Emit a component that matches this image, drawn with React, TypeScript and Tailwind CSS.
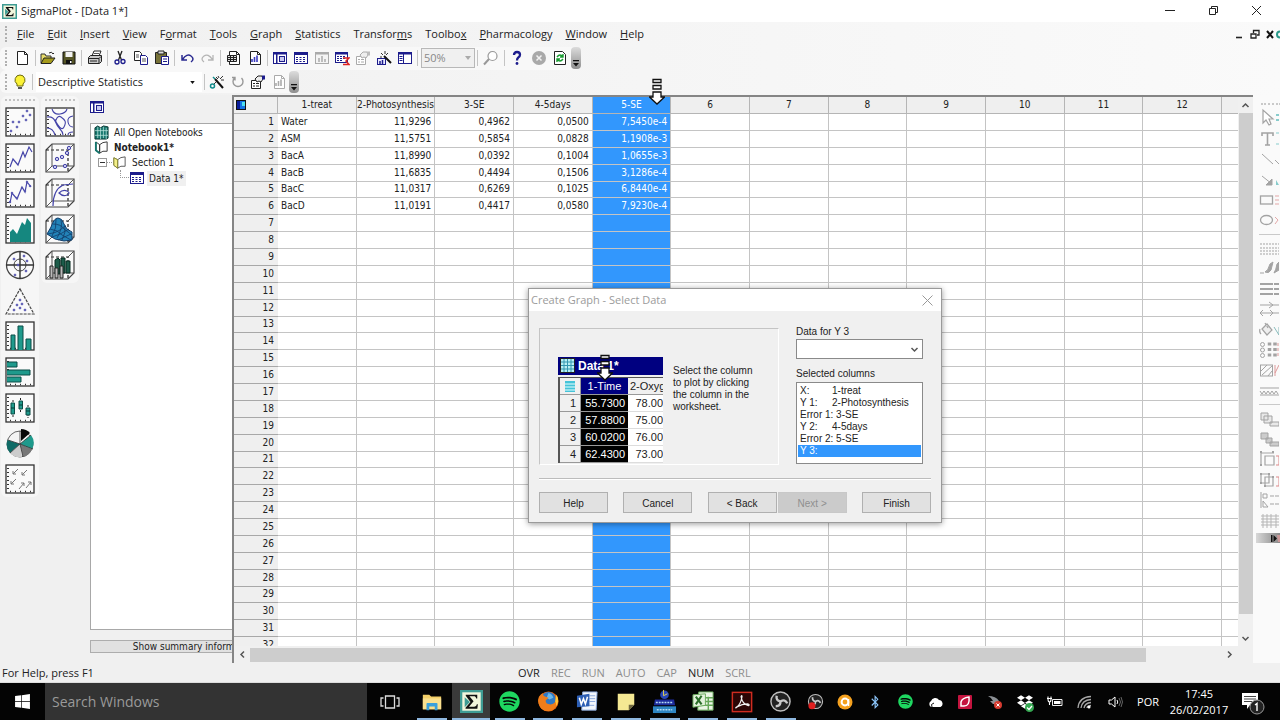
import type { ReactNode } from "react";
import { FaSpotify, FaBluetoothB, FaDropbox, FaWindows } from "react-icons/fa";

const NAVY = "#1c1c8c";
const TEAL = "#1f9a8c";

function Icon({ children, size = 16, view = 16 }: { children: ReactNode; size?: number; view?: number }) {
  return (
    <svg width={size} height={size} viewBox={`0 0 ${view} ${view}`} fill="none" aria-hidden="true" className="block shrink-0">
      {children}
    </svg>
  );
}

function SigmaLogo({ size = 14 }: { size?: number }) {
  return (
    <Icon size={size} view={22}>
      <rect x="1" y="1" width="20" height="20" fill="#f2f6dc" stroke="#3f9c94" strokeWidth="2.4" />
      <path d="M5.500 4.500h11v3.600h-1c-.3-1.600-1-2.100-2.500-2.100H9l4 4.800-4.400 5.200h4.800c1.600 0 2.200-.6 2.700-2.300h1l-.5 4.300H5.300v-1L10 11.500 5.500 5.600z" fill="#111" />
      <path d="M4.500 7l5 4.500-5 5z" fill="#3f9c94" />
    </Icon>
  );
}

/* ---------- toolbar drawings ---------- */
const SheetWindow = () => (
  <Icon>
    <rect x="1.500" y="2.500" width="13" height="11" fill="#fff" stroke={NAVY} />
    <path d="M1 2h14v3H1z" fill={NAVY} />
    <path d="M3 7.500h10M3 9.500h10M3 11.500h10" stroke={NAVY} strokeDasharray="2 1.500" />
  </Icon>
);
const PaneWindow = () => (
  <Icon>
    <rect x="1.500" y="2.500" width="13" height="11" fill="#fff" stroke={NAVY} />
    <path d="M1 2h14v2.500H1zM4 4h1.500v9H4z" fill={NAVY} />
    <rect x="7.500" y="6.500" width="5" height="5" fill="#c8c8f0" stroke={NAVY} />
  </Icon>
);
const SplitWindow = () => (
  <Icon>
    <rect x="1.500" y="2.500" width="13" height="11" fill="#fff" stroke={NAVY} />
    <path d="M1 2h14v2.500H1zM6 4h1v9H6z" fill={NAVY} />
    <path d="M2.500 6.500h3M2.500 8.500h3M2.500 10.500h3" stroke={NAVY} />
  </Icon>
);
const GrayWindow = () => (
  <Icon>
    <rect x="1.500" y="2.500" width="13" height="11" fill="#f4f4f4" stroke="#aaa" />
    <path d="M1 2h14v2.500H1z" fill="#aaa" />
    <path d="M5 12V8M8 12V6M11 12V9" stroke="#aaa" strokeWidth="1.500" />
  </Icon>
);
const RedSheet = () => (
  <Icon>
    <rect x="1.500" y="2.500" width="12" height="10" fill="#fff" stroke={NAVY} />
    <path d="M1 2h13v2.500H1z" fill={NAVY} />
    <path d="M3 6.500h9M3 8.500h9M3 10.500h6" stroke={NAVY} strokeDasharray="2 1" />
    <path d="M9 8h6l-3 3 3 3.500H9" stroke="#d22" strokeWidth="1.500" />
  </Icon>
);
const Properties = ({ color = "#222", accent = NAVY }: { color?: string; accent?: string }) => (
  <Icon>
    <path d="M1.500 6.500h9v8h-9z" fill="#fff" stroke={color} />
    <path d="M3 9.500h2M6 9.500h3M3 12h2M6 12h3" stroke={color} />
    <path d="M5 5l3-3h4l1 3-2 3-2-1-2 1z" fill="#eee" stroke={color} />
    <path d="M12 1.500h3v4h-3z" fill={accent} />
  </Icon>
);
const Wand = () => (
  <Icon>
    <path d="M6 5l8 9" stroke="#111" strokeWidth="2" />
    <path d="M9 2l1 2M14 2l-3 3M15 6l-3 0M7 3l2 2" stroke="#333" />
    <path d="M7 8l-3 3" stroke="#333" />
    <circle cx="3.500" cy="12" r="2" stroke="#118b8b" strokeWidth="1.500" />
    <path d="M4 3l2 2" stroke="#118b8b" strokeWidth="1.500" />
  </Icon>
);
const GraphWand = () => (
  <Icon>
    <rect x="1.500" y="8.500" width="8" height="6" fill="#ececff" stroke={NAVY} />
    <path d="M4 14v-3M6.500 14v-4" stroke={NAVY} strokeWidth="1.500" />
    <path d="M8 6l7 7" stroke="#111" strokeWidth="2" />
    <path d="M5 3l2 2M9 1v3M12 3l-2 2M4 7h2" stroke="#333" />
  </Icon>
);
const PageIcon = ({ kind, color = "#222" }: { kind: "blank" | "grid" | "chart"; color?: string }) => (
  <Icon>
    <path d="M3.500 1.500h7l3 3v10h-10z" fill="#fff" stroke={color} />
    <path d="M10.500 1.500v3h3" stroke={color} />
    {kind === "grid" && <path d="M1.500 5.500h9v6h-9zM1.500 7.500h9M1.500 9.500h9M4.500 5.500v6M7.500 5.500v6" fill="#ddd" stroke="#222" />}
    {kind === "chart" && <path d="M5 12V9M7.500 12V7M10 12V5.500" stroke={color === "#222" ? "#3b3bc0" : color} strokeWidth="1.600" />}
  </Icon>
);

const Sep = () => <span className="mx-[2px] h-4 w-px shrink-0 bg-[#c4c4c4]" />;
const Grip = () => <span className="mx-[5px] h-4 w-0 shrink-0 border-l-2 border-dotted border-[#b0b0b0]" />;
const ToolEnd = () => (
  <span className="flex h-[22px] w-[10px] shrink-0 items-end justify-center rounded-sm bg-gradient-to-b from-[#dcdcdc] to-[#8f8f8f] pb-[2px]">
    <svg width="6" height="7" viewBox="0 0 6 7" aria-hidden="true"><path d="M0 0h6v1.200H0zM0 3h6L3 6.500z" fill="#111" /></svg>
  </span>
);
const Tool = ({ label, children }: { label: string; children: ReactNode }) => (
  <button aria-label={label} className="flex h-5 min-w-0 flex-1 items-center justify-center">{children}</button>
);

/* ---------- menus ---------- */
const menus: [string, string, string][] = [
  ["", "F", "ile"], ["", "E", "dit"], ["", "I", "nsert"], ["", "V", "iew"], ["F", "o", "rmat"], ["", "T", "ools"],
  ["", "G", "raph"], ["", "S", "tatistics"], ["Transfor", "m", "s"], ["Toolbo", "x", ""], ["", "P", "harmacology"],
  ["", "W", "indow"], ["", "H", "elp"],
];

/* ---------- graph palette ---------- */
const Plot = ({ children }: { children?: ReactNode }) => (
  <Icon size={30} view={30}>
    <rect x="1" y="1" width="28" height="28" fill="#fafafa" stroke="#333" strokeWidth="1.300" />
    <path d="M3 4v24" stroke="#333" strokeWidth="2" strokeDasharray="1 3" />
    <path d="M5 27.500h24" stroke="#333" strokeWidth="1.500" strokeDasharray="1 4" />
    {children}
  </Icon>
);
const Cube = ({ children }: { children?: ReactNode }) => (
  <Icon size={30} view={30}>
    <path d="M1 7l6-6h22v22l-6 6H1z" fill="#fafafa" stroke="#444" strokeWidth="1.200" />
    <path d="M1 7h22v22" stroke="#222" strokeWidth="1.200" strokeDasharray="3 2" />
    <path d="M7 1v22h22M7 23l-6 6M29 1l-6 6" stroke="#555" />
    {children}
  </Icon>
);
const dots = (pts: number[][], r = 1.3) => pts.map(([x, y]) => <circle key={`${x}-${y}`} cx={x} cy={y} r={r} stroke="#4444a8" fill="#c9c9ee" />);

const paletteA: [string, ReactNode][] = [
  ["Scatter plot", <Plot>{dots([[6, 24], [8, 15], [12, 20], [14, 15], [18, 9], [21, 13], [22, 4], [25, 8]], 0.9)}</Plot>],
  ["Line plot", <Plot><path d="M5 24l3-8 5 6 5-13 2 5 4-10 3 5" stroke="#4444a8" strokeWidth="1.200" /></Plot>],
  ["Line and scatter plot", <Plot><path d="M5 25l2-10 5 6 5-12 3 5 2-10 4 5" stroke="#4444a8" strokeWidth="1.200" />{dots([[5, 24], [7, 15], [12, 20], [17, 10], [20, 13], [22, 4], [25, 8]], 0.8)}</Plot>],
  ["Area plot", <Plot><path d="M5 28V18l3-3 4 5 5-12 3 3 2-7 4 5v19z" fill="#15877f" /></Plot>],
  ["Polar plot", <Icon size={30} view={30}><circle cx="15" cy="15" r="13.500" fill="#fafafa" stroke="#444" strokeWidth="1.300" /><circle cx="15" cy="15" r="6" stroke="#444" /><path d="M15 1v28M1 15h28" stroke="#333" strokeWidth="1.400" />{dots([[9, 9], [19, 6], [22, 11], [21, 21], [10, 25], [13, 15]], 0.9)}</Icon>],
  ["Ternary plot", <Icon size={30} view={30}><path d="M15 3l14 25H1z" fill="#fafafa" stroke="#444" strokeDasharray="3 1" strokeWidth="1.200" />{dots([[15, 14], [12, 19], [17, 18], [15, 22], [9, 24], [20, 24]], 0.9)}</Icon>],
  ["Vertical bar chart", <Plot><path d="M6 29V14h4v15M13 29V5h5v24M21 29V18h5v11" fill={TEAL} stroke="#0c4d46" /></Plot>],
  ["Horizontal bar chart", <Plot><path d="M2 5h10v5H2M2 13h23v5H2M2 20h14v5H2" fill={TEAL} stroke="#0c4d46" /></Plot>],
  ["Box plot", <Plot><path d="M8 7v17M15.500 5v14M23 12v13" stroke="#222" strokeDasharray="2 1" /><path d="M6 10h3.500v11H6zM14 8h3.500v8H14zM21 15h4v7h-4z" fill={TEAL} stroke="#0c4d46" /><path d="M6 15h3.500M14 12h3.500M21 18h4" stroke="#083b36" /></Plot>],
  ["Pie chart", <Icon size={30} view={30}><circle cx="15" cy="16" r="13" fill="#f4f4f4" stroke="#666" /><path d="M15 16L2.500 12a13 13 0 002.500 13z" fill="#0f6b66" /><path d="M15 16L5 25a13 13 0 0012 4z" fill="#ccc" /><path d="M15 16l3 13a13 13 0 009-8z" fill="#777" /><path d="M15 16l12 5a13 13 0 00-1-14z" fill={TEAL} /><path d="M16 13V1a13 13 0 019 4z" fill="#080808" /><path d="M15 16L3 12M15 16L5 25M15 16l3 13M15 16l13 5M15 16L26 7M15 16V3" stroke="#333" strokeWidth=".8" /></Icon>],
  ["Vector plot", <Plot><path d="M13 5l-5 5m0-3v3h3M22 6l-5 5m0-3v3h3M11 15l-5 5m0-3v3h3M14 25l5-6m-3 0h3v3M21 24l5-6m-3 0h3v3" stroke="#777" /></Plot>],
];
const paletteB: [string, ReactNode][] = [
  ["Contour plot", <Plot><path d="M2 10q6-1 8 4t5 8 3 6M2 21q6 0 8 7M7 2q2 6 8 5t7-5M11 13q2-5 5-3t4 4-1 6-6-2-2-5zM28 9q-6 1-5 6t5 5M23 28q0-3 5-3" stroke="#4444a8" strokeWidth="1.100" /></Plot>],
  ["3D scatter plot", <Cube>{dots([[10, 24], [12, 16], [17, 14], [22, 10], [24, 5], [20, 23]], 1.7)}</Cube>],
  ["3D line plot", <Cube><path d="M8 28q0-16 10-21l10-1M14 15q4-4 8-2t0 4-8-2z" stroke="#4444a8" strokeWidth="1.200" /></Cube>],
  ["Mesh plot", <Cube><path d="M2 20l4-7q3-9 7-9t6 6 8 8v8l-8 1-9-2z" fill="#2383b8" stroke="#123c68" /><path d="M5 15q8 1 12 6l9 5M8 10q8 0 11 5l8 6M3 20q8-1 12-4l5-4M7 23q8-2 17-8M13 26l13-6M11 5Q12 14 7 22M16 6q2 8-4 18M20 11q1 8-3 15" stroke="#123c68" strokeWidth=".8" /></Cube>],
  ["3D bar chart", <Cube><path d="M10 10l3-2 2 2v14h-5zM16 8h4v15h-4zM21 11h4v12h-4z" fill="#1c5c4a" stroke="#082a20" /><path d="M5 16h3v12H5zM10 18h3v10h-3zM15 16h3v12h-3z" fill="#bbb" stroke="#222" /></Cube>],
];
const Palette = ({ items, rows }: { items: [string, ReactNode][]; rows: string }) => (
  <div className="flex w-[38px] flex-col rounded-md bg-[#f6f6f6] pt-[3px]">
    <span className="mx-1 mb-[3px] h-0 border-t-2 border-dotted border-[#c2c2c2]" />
    <div className={`flex flex-col ${rows}`}>
      {items.map(([label, art]) => (
        <button key={label} aria-label={label} className="flex min-h-0 flex-1 items-center justify-center">{art}</button>
      ))}
    </div>
  </div>
);

/* ---------- worksheet ---------- */
const heads = ["1-treat", "2-Photosynthesis", "3-SE", "4-5days", "5-SE", "6", "7", "8", "9", "10", "11", "12"];
const data = [
  ["Water", "11,9296", "0,4962", "0,0500", "7,5450e-4"],
  ["ASM", "11,5751", "0,5854", "0,0828", "1,1908e-3"],
  ["BacA", "11,8990", "0,0392", "0,1004", "1,0655e-3"],
  ["BacB", "11,6835", "0,4494", "0,1506", "3,1286e-4"],
  ["BacC", "11,0317", "0,6269", "0,1025", "6,8440e-4"],
  ["BacD", "11,0191", "0,4417", "0,0580", "7,9230e-4"],
];

function Worksheet() {
  return (
    <table className="h-[calc(100%+8px)] w-full table-fixed border-separate border-spacing-0 text-[10px] leading-3 text-[#222]">
      <colgroup>
        <col className="w-[44px]" />
        {heads.map((h) => <col key={h} />)}
        <col className="w-[16px]" />
      </colgroup>
      <thead>
        <tr className="h-[17px] bg-[#efefef]">
          <th aria-label="Select all" className="border-r border-b border-[#b5b5b5] p-0">
            <svg width="10" height="10" viewBox="0 0 10 10" className="ml-[2px] block" aria-hidden="true">
              <rect x=".5" y=".5" width="9" height="9" fill="#1473e6" stroke="#111" /><path d="M1 1h3v8H1z" fill="#0a1e9a" /><path d="M6 2h3v4H6z" fill="#4fe0ee" />
            </svg>
          </th>
          {heads.map((h, c) => (
            <th key={h} scope="col" className={`overflow-hidden border-r border-b border-[#b5b5b5] p-0 font-normal whitespace-nowrap ${c === 4 ? "bg-[#3297fd] text-white" : ""}`}>{h}</th>
          ))}
          <td className="border-b border-[#b5b5b5] p-0" />
        </tr>
      </thead>
      <tbody>
        {Array.from({ length: 32 }, (_, r) => (
          <tr key={r} className="bg-white">
            <th scope="row" className="border-b border-[#a8a8a8] bg-[#efefef] p-0 pr-1 text-right font-normal">{r + 1}</th>
            {heads.map((h, c) => (
              <td key={h} className={`border-r border-b border-[#c4c4c4] p-0 whitespace-nowrap ${c === 0 ? "pl-[3px]" : "pr-[3px] text-right"} ${c === 4 ? "bg-[#3297fd] text-white" : ""}`}>
                {data[r]?.[c] ?? ""}
              </td>
            ))}
            <td className="border-b border-[#c4c4c4] p-0" />
          </tr>
        ))}
      </tbody>
    </table>
  );
}

const Chevron = ({ dir }: { dir: "up" | "down" | "left" | "right" }) => {
  const d = { up: "M1.500 6L4.500 3l3 3", down: "M1.500 3l3 3 3-3", left: "M6 1.500L3 4.500l3 3", right: "M3 1.500l3 3-3 3" }[dir];
  return <svg width="9" height="9" viewBox="0 0 9 9" fill="none" aria-hidden="true"><path d={d} stroke="#555" strokeWidth="1.500" /></svg>;
};

const DownArrow = () => (
  <svg width="16" height="27" viewBox="0 0 16 27" aria-hidden="true">
    <path d="M4 1.500h8v3H4zM4 7.500h8v3.500H4zM4 14h8v5h3.500L8 26 .5 19H4z" fill="#fff" stroke="#111" strokeWidth="1.300" />
  </svg>
);

/* ---------- drawing toolbar on the right edge ---------- */
const G = "#a3a3a3";
const edgeA: [string, ReactNode][] = [
  ["Select", <><path d="M4 2v13l3-3 3 5 2-1-2-5h4z" fill="#fff" stroke={G} strokeWidth="1.200" /><path d="M17 7h3M17 12h3" stroke="#8cc" strokeWidth="2" /></>],
  ["Text", <><path d="M3 7V4h11v3M8.500 4v12M6 16h5" stroke={G} strokeWidth="1.600" /><path d="M17 4h3M17 15h3" stroke="#8cc" /></>],
  ["Line", <path d="M3 5l11 10M16 11l4 4" stroke={G} />],
  ["Arrow", <><path d="M3 6l10 8M13 9v6H7z" fill={G} stroke={G} /><path d="M17 10l3 5h-3z" fill="#8cc" /></>],
  ["Rectangle", <><rect x="1.500" y="6" width="12" height="8" stroke={G} strokeWidth="1.300" /><path d="M16 6h4M16 10h4M16 14h4" stroke="#e3a8a8" /></>],
  ["Ellipse", <><ellipse cx="7.500" cy="10" rx="6" ry="4.500" stroke={G} strokeWidth="1.300" /><path d="M16 7l3 3-3 4" stroke="#e3a8a8" /></>],
];
const edgeB: [string, ReactNode][] = [
  ["Line style", <path d="M1 6h19M1 10h19M1 13h19M1 16h19" stroke={G} strokeDasharray="2 1" />],
  ["Brush", <path d="M1 15h4M6 14q3-1 5-8l3-2-2 8q-2 4-6 2zM15 15q2-3 3-9l2-2v8z" fill={G} stroke={G} />],
  ["Line weight", <path d="M1 5h13M15 5h5M1 10h13M15 10h5M1 15h13M15 15h5" stroke={G} strokeWidth="2" />],
  ["Arrow ends", <path d="M1 6h19M10 3l4 3-4 3M1 14h19M4 11l-3 3 3 3M11 11l3 3-3 3" stroke={G} />],
  ["Fill colour", <><path d="M3 9l5-5 5 6-5 5zM6 3l3 5M1 9q-1 3 1 5" fill="#eee" stroke={G} strokeWidth="1.200" /><path d="M15 7l5 8v-8" stroke="#8bb" /></>],
  ["Symbols", <><circle cx="3.500" cy="4.500" r="2" stroke={G} /><circle cx="3.500" cy="10" r="2" stroke={G} /><circle cx="3.500" cy="15.500" r="2" stroke={G} /><path d="M10.500 2.500v15M16 2.500v15" stroke={G} strokeWidth="3.500" strokeDasharray="3 2.500" /><path d="M19 3v14" stroke="#d99" strokeDasharray="3 2" /></>],
  ["Pattern", <><rect x="1.500" y="4" width="12" height="11" stroke={G} /><path d="M2 10l6-6M3 14L13 5M9 15l4-5" stroke={G} /><path d="M16 4v11M16 12l4-8" stroke="#d99" /></>],
  ["Spacing", <path d="M1 7h19M1 10l2 3 2-3 2 3 2-3 2 3 2-3 2 3 2-3 2 3M1 14h19" stroke={G} />],
];
const edgeC: [string, ReactNode][] = [
  ["Bring to front", <path d="M2 4h7v7H2zM5 7h8v7H5zM11 13h9v4h-9z" fill="#e8e8e8" stroke={G} />],
  ["Send to back", <path d="M2 4h7v6H2zM7 9h6v5H7zM11 13h9v4h-9z" fill="#ccc" stroke={G} />],
  ["Group", <><path d="M2 2v14M2 4h13M6 7h9v9H6z" stroke={G} strokeWidth="1.200" /><path d="M1 2h2v2H1zM1 15h2v2H1zM13 2h2v2h-2z" fill={G} /><path d="M17 7h3v9h-3" stroke="#d88" /></>],
  ["Ungroup", <><path d="M2 4h8v9H2zM6 7h8v9H6z" stroke={G} strokeWidth="1.200" /><path d="M1 3h2v2H1zM9 3h2v2H9zM13 6h2v2h-2zM5 15h2v2H5zM1 12h2v2H1z" fill={G} /><path d="M17 7h3v9h-3" stroke="#d88" /></>],
  ["Align", <><path d="M2 2v16M4 4h4v4H4zM4 11l5 6H4z" stroke={G} /><path d="M11 6h9M11 14h9" stroke={G} strokeDasharray="4 1" /></>],
  ["Grid", <path d="M2 5h18M2 8h18M2 11h18M2 14h18M4 3v14M8 3v14M12 3v14M17 3v14" stroke="#b5b5b5" />],
];
const EdgeGroup = ({ items }: { items: [string, ReactNode][] }) => (
  <>
    {items.map(([label, art]) => (
      <button key={label} aria-label={label} className="flex min-h-0 flex-1 items-center"><Icon size={20} view={20}>{art}</Icon></button>
    ))}
  </>
);
const EdgeSep = () => <span className="my-[3px] h-px shrink-0 bg-[#c9c9c9]" />;

/* ---------- wizard dialog ---------- */
const columns: [string, string][] = [["X:", "1-treat"], ["Y 1:", "2-Photosynthesis"], ["Error 1:", "3-SE"], ["Y 2:", "4-5days"], ["Error 2:", "5-SE"], ["Y 3:", ""]];
const sample = [["55.7300", "78.00"], ["57.8800", "75.00"], ["60.0200", "76.00"], ["62.4300", "73.00"]];

const DialogButton = ({ children, disabled = false }: { children: ReactNode; disabled?: boolean }) => (
  <button disabled={disabled} className="h-[21px] w-[69px] border border-[#b0b0b0] bg-[#e1e1e1] pt-[2px] text-[#222] disabled:border-[#c8c8c8] disabled:bg-[#cbcbcb] disabled:text-[#8f8f8f]">{children}</button>
);

function Wizard() {
  return (
    <section role="dialog" aria-label="Create Graph - Select Data" className="absolute top-[288px] left-[528px] z-10 w-[414px] border border-[#9a9a9a] bg-[#f0f0f0] font-['Liberation_Sans',sans-serif] text-[10px] leading-3 text-[#222] shadow-[0_1px_6px_rgba(0,0,0,0.4)]">
      <header className="flex h-[22px] items-center justify-between bg-white pr-2 pl-[2px] font-['Open_Sans',sans-serif] text-[11px] text-[#9b9b9b]">
        <h2>Create Graph - Select Data</h2>
        <button aria-label="Close"><Icon size={11} view={11}><path d="M.5.5l10 10M10.500.5l-10 10" stroke="#999" /></Icon></button>
      </header>
      <div className="flex gap-[17px] px-[10px] pt-[17px]">
        <div className="flex h-[137px] w-[240px] gap-[10px] border border-t-[#c4c4c4] border-r-white border-b-white border-l-[#c4c4c4] pt-[28px] pl-[18px]">
          <div className="relative w-[105px] shrink-0">
            <div className="flex h-[18px] items-center gap-[2px] bg-[#000080] pl-[2px] text-[12px] font-bold text-white">
              <Icon><rect x=".5" y=".5" width="14" height="14" fill="#b8f0f4" stroke="#222" /><path d="M1 4h13M1 7.500h13M1 11h13M4 1v13M7.500 1v13M11 1v13" stroke="#3297b0" /></Icon>
              Data 1*
            </div>
            <div className="mt-[2px] overflow-hidden border-t border-l-2 border-[#555]">
              <table className="w-full table-fixed border-separate border-spacing-0 text-[11px] leading-4">
                <thead>
                  <tr>
                    <th aria-label="Row" className="w-[21px] border-r border-b border-[#999] p-0"><svg width="10" height="11" viewBox="0 0 10 11" className="mx-auto block" aria-hidden="true"><path d="M0 0h10v11H0z" fill="#45c3d8" /><path d="M0 3h10M0 6h10M0 9h10" stroke="#e8ffff" /></svg></th>
                    <th className="w-[47px] border-b border-[#999] bg-[#000080] p-0 font-normal text-white">1-Time</th>
                    <th className="overflow-hidden border-b border-[#999] p-0 pl-[2px] text-left font-normal whitespace-nowrap">2-Oxyg</th>
                  </tr>
                </thead>
                <tbody>
                  {sample.map(([a, b], i) => (
                    <tr key={a}>
                      <th scope="row" className="border-r border-b border-[#999] p-0 pr-1 text-right font-normal">{i + 1}</th>
                      <td className="border-b border-[#999] bg-black p-0 pr-[3px] text-right text-white">{a}</td>
                      <td className="border-b border-[#ddd] bg-white p-0 text-right">{b}</td>
                    </tr>
                  ))}
                </tbody>
              </table>
            </div>
            <div className="absolute top-[-3px] left-[39px]"><DownArrow /></div>
          </div>
          <p className="w-[86px] pt-[8px]">Select the column to plot by clicking the column in the worksheet.</p>
        </div>
        <div className="w-[127px]">
          <label htmlFor="dataFor" className="-mt-[2px] block">Data for Y 3</label>
          <div className="relative mt-px">
            <select id="dataFor" className="block h-5 w-full appearance-none border border-[#8a8a8a] bg-white" />
            <span className="pointer-events-none absolute top-[6px] right-1"><Chevron dir="down" /></span>
          </div>
          <p id="selected" className="mt-[9px]">Selected columns</p>
          <ul role="listbox" aria-labelledby="selected" className="mt-[2px] h-[82px] border border-[#8a8a8a] bg-white px-px pt-[2px]">
            {columns.map(([k, v], i) => (
              <li key={k} role="option" aria-selected={i === 5} className="flex pl-[2px] whitespace-pre aria-selected:bg-[#3297fd] aria-selected:text-white">
                <span className={k.startsWith("Error") ? "" : "w-8"}>{k}</span>
                {k.startsWith("Error") ? ` ${v}` : v}
              </li>
            ))}
          </ul>
        </div>
      </div>
      <div className="mx-[10px] mt-[13px] border-t border-b border-t-[#bcbcbc] border-b-white" />
      <footer className="flex justify-between px-[10px] pt-[12px] pb-[9px]">
        <DialogButton>Help</DialogButton>
        <DialogButton>Cancel</DialogButton>
        <div className="flex gap-px"><DialogButton>&lt; Back</DialogButton><DialogButton disabled>Next &gt;</DialogButton></div>
        <DialogButton>Finish</DialogButton>
      </footer>
    </section>
  );
}

/* ---------- taskbar ---------- */
const ObsRing = () => (<><circle cx="12" cy="12" r="10" fill="#222" stroke="#bdbdbd" strokeWidth="1.500" /><path d="M12 12q-5-1-4-6M12 12q5-3 7 2M12 12q0 5-5 5" stroke="#c9c9c9" strokeWidth="2.500" /></>);
const apps: [string, ReactNode][] = [
  ["File Explorer", <Icon size={22} view={24}><path d="M2 4h7l2 2h11v14H2z" fill="#f4cf68" /><path d="M2 8h20v12H2z" fill="#fae08f" /><path d="M6 21v-7q0-1 1-1h10q1 0 1 1v7h-3v-4H9v4z" fill="#3aa0dc" /></Icon>],
  ["SigmaPlot", <SigmaLogo size={23} />],
  ["Spotify", <FaSpotify size={21} color="#1ed760" />],
  ["Firefox", <Icon size={23} view={24}><circle cx="12" cy="12" r="10.500" fill="#e8650e" /><circle cx="12" cy="9.500" r="7.500" fill="#2f78c4" /><path d="M12 3q4 1 5 5l-4 2-3-2z" fill="#69b8ea" /><path d="M2 7q2-3 4-4 0 3 3 4l3 1-3 3q0 4 5 4 5 0 6-5 1-5-1-6 5 4 2 11-3 7-10 7T1.500 14q-1-4 .5-7z" fill="#ef7d1a" /><path d="M20 5q4 6 0 12 0-4-1-5z" fill="#ffc83a" /></Icon>],
  ["Word", <Icon size={23} view={24}><path d="M7 2h15l-1 19H6z" fill="#f2f6fc" stroke="#8aa8dc" /><path d="M14 6h6M14 9h6M14 12h6M9 16h10" stroke="#8aa8dc" /><path d="M1 6l13-2v13L1 18z" fill="#2c5eb5" /><path d="M3.500 8l2 7 2.300-6 2 5.500L12 7" stroke="#fff" strokeWidth="1.600" /></Icon>],
  ["Sticky Notes", <Icon size={22} view={24}><path d="M3 3h18v12l-6 6H3z" fill="#f4e893" /><path d="M15 21v-6h6z" fill="#6d6640" /></Icon>],
  ["Pearson Statistics", <Icon size={25} view={26}><path d="M2 17l1-6h20l1 6z" fill="#1d2b9c" /><circle cx="13" cy="6" r="4.500" fill="#2947b8" /><path d="M12 1v6l4-2" stroke="#e4d24d" /><path d="M1 18h24v7H1z" fill="#2e86c4" /><path d="M4 14h18M5 21.500h16" stroke="#b6dcf5" strokeWidth="1.500" strokeDasharray="2 1" /></Icon>],
  ["Excel", <Icon size={23} view={24}><path d="M7 2h15v19H6z" fill="#eaf5e4" stroke="#67a85a" /><path d="M13 8h9M13 12h9M8 16h14M17 7v14" stroke="#67a85a" strokeWidth="1.500" /><path d="M1 5l13-1v12L1 18z" fill="#e3f2dc" stroke="#67a85a" /><path d="M4 7l6 8M10 6l-6 9" stroke="#2c6e2a" strokeWidth="2.200" /></Icon>],
  ["Acrobat", <Icon size={22} view={24}><rect x="1.500" y="1.500" width="21" height="21" fill="#2b0505" stroke="#cf2c20" strokeWidth="1.600" /><path d="M6 18q5-4 6-12 0-2-1 0 1 8 8 10 2-1-1-2-6 0-11 3-3 2-1 1z" stroke="#f0f0f0" strokeWidth="1.400" /></Icon>],
  ["OBS", <Icon size={23} view={24}><ObsRing /></Icon>],
];
const tray: [string, ReactNode][] = [
  ["OBS recording", <Icon size={17} view={24}><ObsRing /><circle cx="7" cy="18" r="5" fill="#e02020" /></Icon>],
  ["Avast", <Icon><circle cx="8" cy="8" r="7.500" fill="#f5a11f" /><circle cx="8" cy="8" r="3.400" stroke="#fff" strokeWidth="2" /><path d="M11.500 5v7" stroke="#fff" strokeWidth="1.500" /></Icon>],
  ["Bluetooth", <FaBluetoothB size={14} color="#8cc4f8" />],
  ["Spotify", <FaSpotify size={15} color="#1ed760" />],
  ["OneDrive", <Icon><path d="M4 13a3.500 3.500 0 010-6 4.500 4.500 0 018-1 3.700 3.700 0 011.500 7z" fill="#fff" /><path d="M5 13q-2-3 2-4" stroke="#111" /></Icon>],
  ["Creative app", <Icon><rect x="1" y="1" width="14" height="14" rx="1" fill="#c4143f" /><path d="M4 12V8q1-4 8-5 1 9-5 9z" stroke="#fff" strokeWidth="1.500" /></Icon>],
  ["Network drive", <Icon><path d="M1 2q8 0 11 5H6Q5 4 1 2zM3 7h9v3H6z" fill="#8b8f94" /><circle cx="11" cy="11" r="4" fill="#d63b30" /><path d="M9.500 9.500l3 3M12.500 9.500l-3 3" stroke="#fff" /></Icon>],
  ["Dropbox", <span className="relative"><FaDropbox size={16} color="#fff" /><svg width="9" height="9" viewBox="0 0 9 9" className="absolute right-[-1px] bottom-[-2px]" aria-hidden="true"><circle cx="4.500" cy="4.500" r="4.500" fill="#35a852" /><path d="M2 4.500l2 2 3-3.500" stroke="#fff" fill="none" strokeWidth="1.200" /></svg></span>],
  ["Power", <Icon><path d="M5.500 5.500h9.500v6H5.500z" stroke="#eee" /><path d="M7 7h6.500v3H7z" fill="#fff" /><path d="M0 4.500h5M1 2.500v2M4 2.500v2M1 5q0 3 1.500 3T4 5M2.500 8v3" stroke="#fff" strokeWidth="1.100" /></Icon>],
  ["Wi-Fi", <Icon><path d="M1 14Q2 3 14 2.500M4 14q1-8 10-8.500M7 14q1-5 7-5.500M10 14q0-2 4-2.500" stroke="#a8a8a8" strokeWidth="1.300" /><circle cx="12" cy="13" r="1.500" fill="#fff" /></Icon>],
  ["Volume", <Icon><path d="M2 6h2.500L8 3v10l-3.500-3H2z" stroke="#fff" /><path d="M10 6q1.500 2 0 4" stroke="#fff" /><path d="M12 4q3 4 0 8M14 3q3 5 0 10" stroke="#666" /></Icon>],
];

const states: [string, boolean][] = [["OVR", true], ["REC", false], ["RUN", false], ["AUTO", false], ["CAP", false], ["NUM", true], ["SCRL", false]];

export default function App() {
  return (
    <div className="relative flex h-screen flex-col overflow-hidden bg-[#f0f0f0] font-['Open_Sans',sans-serif] text-[11px] leading-4 text-[#222]">
      <header className="flex h-[22px] shrink-0 items-center bg-white pl-[2px]">
        <SigmaLogo size={15} />
        <h1 className="ml-1 flex-1">SigmaPlot - [Data 1*]</h1>
        <div className="flex items-center gap-[32px] pr-[18px] pb-[2px]">
          <button aria-label="Minimize"><Icon size={11} view={11}><path d="M0 5.500h10" stroke="#222" /></Icon></button>
          <button aria-label="Restore"><Icon size={11} view={11}><path d="M1.500 3.500h6v6h-6zM3.500 3V1.500h6v6H8" stroke="#222" /></Icon></button>
          <button aria-label="Close"><Icon size={11} view={11}><path d="M1 1l9 9M10 1l-9 9" stroke="#222" /></Icon></button>
        </div>
      </header>

      <div className="shrink-0 bg-gradient-to-r from-[#f0f0f0] to-[#fafafa]">
        <nav className="flex h-6 items-center">
          <Grip />
          <ul className="flex flex-1 gap-[13px] pl-[5px]">
            {menus.map(([a, u, b]) => <li key={a + u + b}><button>{a}<span className="underline">{u}</span>{b}</button></li>)}
          </ul>
          <div className="flex items-center gap-[6px]">
            <button aria-label="Minimize worksheet"><Icon size={9} view={9}><path d="M1 7.500h6" stroke="#222" strokeWidth="1.600" /></Icon></button>
            <button aria-label="Restore worksheet"><Icon size={10} view={10}><path d="M1 5h5v4H1zM3.500 4V1.500h5.500V6H7" stroke="#222" strokeWidth="1.300" /></Icon></button>
            <button aria-label="Close worksheet" className="flex"><Icon size={9} view={9}><path d="M1 1l6 7M7 1L1 8" stroke="#111" strokeWidth="2" /></Icon><svg width="5" height="9" viewBox="0 0 5 9" aria-hidden="true"><path d="M5 1.500a3 3 0 000 6" stroke="#2a9a8a" strokeWidth="2" fill="none" /></svg></button>
          </div>
        </nav>

        <div className="flex h-6 items-center">
          <div className="flex h-[23px] items-center rounded-md bg-[#f8f8f8]">
            <Grip />
            <div className="flex w-[408px] items-center">
              <Tool label="New"><PageIcon kind="blank" /></Tool><Sep />
              <Tool label="Open"><Icon><path d="M1 13V4h4l1 2h5v2" fill="#e8dc6a" stroke="#333" /><path d="M1 13.500L4 8h11l-4 5.500z" fill="#a59a1c" stroke="#222" /><path d="M9 3q3-2 4 1l1-1" stroke="#222" /></Icon></Tool>
              <Tool label="Save"><Icon><path d="M2 2h12v12H2z" fill="#555526" stroke="#111" /><path d="M4.500 2h7v5h-7z" fill="#f2f2f2" /><path d="M5 10h6v4H5z" fill="#111" /><path d="M9 11h1.500v2H9z" fill="#fff" /></Icon></Tool><Sep />
              <Tool label="Print"><Icon><path d="M5 6l2-5h7l-2 5" fill="#fff" stroke="#222" /><path d="M1.500 7.500l2-2h11v6l-2 2h-11z" fill="#c9c9c9" stroke="#222" /><path d="M2 8.500h10v4.500M12 8.500l2-2M3 11h7" stroke="#222" /><path d="M7 3.500h5" stroke="#555" /></Icon></Tool><Sep />
              <Tool label="Cut"><Icon><path d="M6 1l3.500 9M10 1L6.500 10" stroke="#222" strokeWidth="1.300" /><circle cx="5" cy="12" r="2" stroke={NAVY} strokeWidth="1.300" /><circle cx="11" cy="11.500" r="2" stroke={NAVY} strokeWidth="1.300" /></Icon></Tool>
              <Tool label="Copy"><Icon><path d="M1.500 1.500h5l2 2v7h-7z" fill="#fff" stroke="#222" /><path d="M7.500 5.500h5l2 2v7h-7z" fill="#fff" stroke={NAVY} /><path d="M3 5h3M3 7h3M9 9h4M9 11h4" stroke="#555" /></Icon></Tool>
              <Tool label="Paste"><Icon><path d="M1.500 2.500h11v11h-11z" fill="#777238" stroke="#222" /><path d="M4 1h6v3H4z" fill="#ddd" stroke="#222" /><path d="M7.500 6.500h7v8h-7z" fill="#fff" stroke={NAVY} /><path d="M9 9h4M9 11.500h4" stroke={NAVY} /></Icon></Tool><Sep />
              <Tool label="Undo"><Icon><path d="M3 5v5h5M3.500 9.500Q8 3 12 6t0 6" stroke="#2a2a90" strokeWidth="1.500" /></Icon></Tool>
              <Tool label="Redo"><Icon><path d="M13 5v5H8M12.500 9.500Q8 3 4 6t0 6" stroke="#b5b5b5" strokeWidth="1.300" /></Icon></Tool><Sep />
              <Tool label="New worksheet"><PageIcon kind="grid" /></Tool>
              <Tool label="New graph page"><PageIcon kind="chart" /></Tool><Sep />
              <Tool label="Notebook"><PaneWindow /></Tool>
              <Tool label="Worksheet"><SheetWindow /></Tool>
              <Tool label="Graph page"><GrayWindow /></Tool>
              <Tool label="Column statistics"><RedSheet /></Tool>
              <Tool label="Object properties"><Properties color="#aaa" accent="#bbb" /></Tool>
              <Tool label="Graph wizard"><GraphWand /></Tool>
              <Tool label="Panel"><SplitWindow /></Tool><Sep />
            </div>
            <div className="relative ml-px">
              <select aria-label="Zoom" disabled className="block h-5 w-[54px] appearance-none border border-[#b8b8b8] bg-[#f0f0f0] pl-[2px] text-[#888] opacity-100"><option>50%</option></select>
              <svg width="6" height="4" viewBox="0 0 6 4" className="pointer-events-none absolute top-2 right-1" aria-hidden="true"><path d="M0 0h6L3 4z" fill="#aaa" /></svg>
            </div>
            <Sep />
            <div className="flex w-[91px] items-center">
              <Tool label="Zoom tool"><Icon><circle cx="9.500" cy="6" r="4.500" fill="#fff" stroke="#999" strokeWidth="1.200" /><path d="M6 9l-5 5.500" stroke="#999" strokeWidth="2" /></Icon></Tool><Sep />
              <Tool label="Help"><Icon><path d="M5 5q0-3 3-3t3 2.800q0 1.700-1.700 2.700Q8 8.500 8 10.500" stroke={NAVY} strokeWidth="2.300" /><circle cx="8" cy="13.500" r="1.400" fill={NAVY} /></Icon></Tool>
              <Tool label="Stop"><Icon><circle cx="8" cy="8" r="7" fill="#a9a9a9" /><path d="M5.500 5.500l5 5M10.500 5.500l-5 5" stroke="#f2f2f2" strokeWidth="1.500" /></Icon></Tool>
              <Tool label="Refresh"><Icon><path d="M2.500 1.500h8l3 3v10h-11z" fill="#fff" stroke="#222" /><path d="M5 7q3-4 6 0M11 4v3H8M11 9q-3 4-6 0M5 12V9h3" stroke="#189a30" strokeWidth="1.400" /></Icon></Tool>
            </div>
            <ToolEnd />
          </div>
        </div>

        <div className="flex h-[25px] items-start">
          <div className="flex h-[23px] items-center rounded-md bg-[#f8f8f8]">
            <Grip />
            <button aria-label="Tip" className="w-[18px]"><Icon><path d="M8 1a5 5 0 00-3 9v2h6v-2a5 5 0 00-3-9z" fill="#fbf236" stroke="#6d6a12" /><path d="M6 13h4v2H6z" fill="#555" /></Icon></button>
            <Sep />
            <div className="relative ml-[1px]">
              <select aria-label="Analysis" className="block h-5 w-[166px] appearance-none bg-white pl-[2px]"><option>Descriptive Statistics</option></select>
              <svg width="5" height="3" viewBox="0 0 6 4" className="pointer-events-none absolute top-[9px] right-[7px]" aria-hidden="true"><path d="M0 0h6L3 4z" fill="#111" /></svg>
            </div>
            <Sep />
            <div className="flex w-[82px]">
              <Tool label="Run test"><Wand /></Tool>
              <Tool label="Rerun"><Icon><path d="M4.500 4a5 5 0 107 0M2 3.500h3v3" stroke="#999" strokeWidth="1.400" /></Icon></Tool>
              <Tool label="Options"><Properties /></Tool>
              <Tool label="Result graph"><PageIcon kind="chart" color="#aaa" /></Tool>
            </div>
            <ToolEnd />
          </div>
        </div>
      </div>

      <main className="flex min-h-0 flex-1">
        <aside className="flex items-start gap-[2px] pt-px pl-[1px]" aria-label="Graph types">
          <Palette items={paletteA} rows="h-[393px]" />
          <Palette items={paletteB} rows="h-[179px]" />
        </aside>
        <aside className="ml-[11px] flex w-[142px] flex-col overflow-hidden pt-1" aria-label="Notebooks">
          <button aria-label="Notebook view" className="ml-[-1px] flex h-6 w-4 items-start"><PaneWindow /></button>
          <div className="min-h-0 flex-1 border border-r-0 border-[#a8a8a8] bg-white pt-[1px] font-['DejaVu_Sans_Condensed','DejaVu_Sans',sans-serif] text-[10px] leading-[15px] whitespace-nowrap">
            <ul>
              <li className="flex items-center gap-[5px] pl-[3px]"><Icon size={15}><path d="M1 3l3-2 3 2 3-2 5 1v12l-2 1H1z" fill="#14756c" stroke="#0b3532" /><path d="M4 2v12M7 3v12M10 2v12M13 3v12M1 6h14M1 11h14" stroke="#bfe5df" strokeWidth=".8" /></Icon>All Open Notebooks</li>
              <li className="flex items-center gap-[5px] pl-[3px] font-bold"><Icon size={15}><path d="M2 2l4 3v9l-4-3zM6 5q3-3 8-3v10q-5-1-8 2z" fill="#fff" stroke="#333" /><path d="M2 2v9l4 3" stroke="#14756c" strokeWidth="2" /></Icon>Notebook1*</li>
              <li className="flex items-center pl-[7px]">
                <Icon size={9} view={9}><rect x=".5" y=".5" width="8" height="8" fill="#fff" stroke="#999" /><path d="M2 4.500h5" stroke="#333" /></Icon>
                <span className="w-[5px] border-t border-dotted border-[#999]" />
                <Icon size={15}><path d="M2 3l4 2v9l-4-3zM6 5q3-3 8-3v10q-5-1-8 2z" fill="#fff" stroke="#555" /><path d="M2 3l4 2v9l-4-3z" fill="#f4f08a" stroke="#8a8a30" /></Icon>
                <span className="pl-[5px]">Section 1</span>
              </li>
              <li className="flex items-center pl-[29px]">
                <span className="h-2 w-[9px] -translate-y-1 border-b border-l border-dotted border-[#999]" />
                <SheetWindow />
                <span className="ml-[2px] bg-[#f0f0f0] px-[2px]">Data 1*</span>
              </li>
            </ul>
          </div>
          <button className="mt-[10px] mb-[10px] h-[13px] w-[210px] overflow-hidden border border-[#adadad] bg-[#e1e1e1] text-center font-['DejaVu_Sans_Condensed','DejaVu_Sans',sans-serif] text-[10px] leading-3 whitespace-nowrap">Show summary information</button>
        </aside>

        <section className="flex min-w-0 flex-1 flex-col border-t-2 border-l-2 border-[#858585] bg-[#f0f0f0] font-['DejaVu_Sans_Condensed','DejaVu_Sans',sans-serif]" aria-label="Worksheet">
          <div className="flex min-h-0 flex-1">
            <div className="min-w-0 flex-1 overflow-hidden"><Worksheet /></div>
            <div className="flex w-[15px] flex-col items-center" aria-hidden="true">
              <span className="flex h-4 items-center"><Chevron dir="up" /></span>
              <span className="mb-[16px] w-full flex-1 border-l border-[#f0f0f0] bg-[#cdcdcd]" />
              <span className="flex h-4 items-center"><Chevron dir="down" /></span>
            </div>
          </div>
          <div className="flex h-[17px] shrink-0 items-center" aria-hidden="true">
            <span className="flex w-4 justify-center"><Chevron dir="left" /></span>
            <span className="mr-[79px] h-[14px] flex-1 bg-[#cdcdcd]" />
            <span className="mr-[19px]"><Chevron dir="right" /></span>
          </div>
        </section>

        <aside className="flex w-[27px] flex-col overflow-hidden bg-[#fafafa] pt-2 pl-[6px]" aria-label="Drawing tools">
          <span className="mb-[3px] ml-[2px] w-[20px] border-t-2 border-dotted border-[#c9c9c9]" />
          <div className="flex h-[423px] w-[21px] flex-col">
            <EdgeGroup items={edgeA} /><EdgeSep />
            <EdgeGroup items={edgeB} /><EdgeSep />
            <EdgeGroup items={edgeC} />
          </div>
          <span className="mt-[2px] ml-[-3px] flex h-[10px] w-6 items-center justify-end bg-gradient-to-r from-[#d8d8d8] to-[#888]"><svg width="9" height="7" viewBox="0 0 9 7" aria-hidden="true"><path d="M0 0h1.500v7H0zM2.500 0L6 3.500 2.500 7z" fill="#111" /><path d="M6 0h3v7H7z" fill="#c99" /></svg></span>
        </aside>
      </main>

      <footer className="flex h-[20px] shrink-0 items-center border-b border-[#ddd] pl-[2px]">
        <span className="w-[516px]">For Help, press F1</span>
        <div className="flex gap-[11px]">{states.map(([s, on]) => <span key={s} className={on ? "" : "text-[#8d8d8d]"}>{s}</span>)}</div>
      </footer>

      <nav className="flex h-[37px] shrink-0 items-stretch bg-[#040404] text-white" aria-label="Taskbar">
        <button aria-label="Start" className="flex w-[45px] items-center justify-center"><FaWindows size={17} /></button>
        <input aria-label="Search Windows" placeholder="Search Windows" className="w-[322px] bg-[#333] px-[7px] text-[14px] text-white placeholder:text-[#9a9a9a]" />
        <button aria-label="Task view" className="flex w-[46px] items-center justify-center"><Icon size={20} view={20}><path d="M5.500 4h9v12h-9zM3.500 6H1v8h2.500M16.500 6H19v8h-2.500" stroke="#ddd" strokeWidth="1.300" /></Icon></button>
        <div className="flex w-[387px]">
          {apps.map(([label, art], i) => (
            <button key={label} aria-label={label} className={`flex min-w-0 flex-1 flex-col items-center ${i === 1 ? "bg-[#3a3a3a]" : ""}`}>
              <span className="flex flex-1 items-center pt-[2px]">{art}</span>
              <span className={`h-[2px] bg-[#8fb8e0] ${i === 1 ? "w-full" : "w-[30px]"}`} />
            </button>
          ))}
        </div>
        <div className="ml-auto flex items-center">
          {tray.map(([label, art]) => <button key={label} aria-label={label} className="flex w-[30px] items-center justify-center">{art}</button>)}
          <span className="w-[36px] text-center">POR</span>
          <time className="w-[66px] text-center leading-4">17:45<br />26/02/2017</time>
          <button aria-label="Notifications" className="flex w-[48px] items-center pl-[9px]">
            <Icon size={26} view={26}><path d="M1 4h16v12H9l-3 4v-4H1z" fill="#fff" /><path d="M3 7.500h12M3 10h12M3 12.500h8" stroke="#444" /><circle cx="16" cy="18" r="7" fill="#222" stroke="#999" /><path d="M14 16l2-1.500V22" stroke="#fff" strokeWidth="1.400" /></Icon>
          </button>
        </div>
      </nav>
      <Wizard />
      <div className="pointer-events-none absolute top-[78px] left-[649px] z-20"><DownArrow /></div>
    </div>
  );
}
